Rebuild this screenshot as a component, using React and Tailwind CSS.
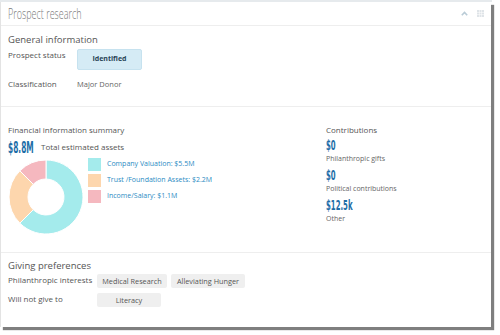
const BODY = { fontFamily: "'Open Sans', 'Noto Sans', sans-serif" };
const COND = { fontFamily: "'DejaVu Sans Condensed', 'DejaVu Sans', sans-serif" };

function arcPath(cx, cy, r, R, a0, a1) {
  const rad = (a) => ((a - 90) * Math.PI) / 180;
  const p = (rr, a) => [cx + rr * Math.cos(rad(a)), cy + rr * Math.sin(rad(a))];
  const large = a1 - a0 > 180 ? 1 : 0;
  const [x0, y0] = p(R, a0);
  const [x1, y1] = p(R, a1);
  const [x2, y2] = p(r, a1);
  const [x3, y3] = p(r, a0);
  return `M${x0} ${y0} A${R} ${R} 0 ${large} 1 ${x1} ${y1} L${x2} ${y2} A${r} ${r} 0 ${large} 0 ${x3} ${y3} Z`;
}

function Donut() {
  const slices = [
    { from: 0, to: 225, color: "#a4ebec" },
    { from: 225, to: 315, color: "#fdd6ad" },
    { from: 315, to: 360, color: "#f5b8bf" },
  ];
  return (
    <svg width="76" height="76" viewBox="0 0 76 76">
      {slices.map((s) => (
        <path
          key={s.from}
          d={arcPath(38, 38, 18, 37, s.from, s.to)}
          fill={s.color}
          stroke="#fff"
          strokeWidth="1"
        />
      ))}
    </svg>
  );
}

function Legend({ color, label }) {
  return (
    <div className="flex items-center gap-[6px] h-[16px]">
      <span className="w-[13px] h-[13px]" style={{ background: color }} />
      <span className="text-[7px] text-[#2b8bc3]">{label}</span>
    </div>
  );
}

function Amount({ children, className = "" }) {
  return (
    <div className={"h-[12px] flex items-center " + className}>
      <span
        className="inline-block origin-left scale-x-[0.55] text-[14px] font-bold text-[#1d6ea7] leading-none"
        style={COND}
      >
        {children}
      </span>
    </div>
  );
}

function Tag({ children, w }) {
  return (
    <span
      className={"h-[14px] flex items-center justify-center bg-[#efefef] rounded-[2px] text-[7.3px] text-[#555] " + w}
    >
      {children}
    </span>
  );
}

export default function App() {
  return (
    <div className="w-[500px] h-[335px] bg-white overflow-hidden" style={BODY}>
      <div className="w-[492px] h-[2px] bg-[#e6eaed]" />
      <div className="w-[491px] h-[325px] bg-white border-l border-[#e3e3e3] shadow-[3px_3px_1px_rgba(0,0,0,0.5)] flex flex-col">
        {/* header */}
        <div className="h-[24px] flex items-center justify-between pl-[7px] pr-[7px] border-b border-[#eeeeee]">
          <span
            className="inline-block origin-left scale-x-[0.6] text-[15px] font-light text-[#7a7a7a] leading-none whitespace-nowrap"
            style={{ fontFamily: "'Open Sans', sans-serif" }}
          >
            Prospect research
          </span>
          <div className="flex items-center gap-[9px]">
            <svg width="7" height="5" viewBox="0 0 7 5">
              <path d="M0.8 4.2 L3.5 1.5 L6.2 4.2" fill="none" stroke="#b9cbd6" strokeWidth="1.6" />
            </svg>
            <svg width="7" height="7" viewBox="0 0 7 7" fill="#dfe4e8">
              <rect x="0" y="0" width="2" height="2" />
              <rect x="2.5" y="0" width="2" height="2" />
              <rect x="5" y="0" width="2" height="2" />
              <rect x="0" y="2.5" width="2" height="2" />
              <rect x="2.5" y="2.5" width="2" height="2" />
              <rect x="5" y="2.5" width="2" height="2" />
              <rect x="0" y="5" width="2" height="2" />
              <rect x="2.5" y="5" width="2" height="2" />
              <rect x="5" y="5" width="2" height="2" />
            </svg>
          </div>
        </div>

        {/* general information */}
        <div className="h-[81px] border-b border-[#eeeeee] pl-[7px] pt-[8px]">
          <div className="text-[9.5px] text-[#555] leading-[12px]">General information</div>
          <div className="flex mt-[3px]">
            <div className="w-[69px] text-[8px] text-[#555] leading-[12px] whitespace-nowrap">Prospect status</div>
            <div className="w-[65px] h-[21px] flex items-center justify-center bg-[#d5ebf5] border border-[#c6e2ef] rounded-[2px] text-[7px] font-bold text-[#2a4557]">
              Identified
            </div>
          </div>
          <div className="flex mt-[8px] text-[8px] text-[#555] leading-[12px]">
            <div className="w-[69px]">Classification</div>
            <div className="text-[#666] text-[7.5px]">Major Donor</div>
          </div>
        </div>

        {/* financial */}
        <div className="h-[146px] border-b border-[#eeeeee] flex pt-[17px]">
          <div className="w-[325px] pl-[7px]">
            <div className="text-[8px] font-medium text-[#555] leading-[12px] whitespace-nowrap">
              Financial information summary
            </div>
            <div className="flex items-center mt-[3px] h-[15px]">
              <div className="w-[33px]">
                <span
                  className="inline-block origin-left scale-x-[0.55] text-[15px] font-bold text-[#1d6ea7] leading-none"
                  style={COND}
                >
                  $8.8M
                </span>
              </div>
              <span className="text-[8px] text-[#555]">Total estimated assets</span>
            </div>
            <div className="flex mt-[2px]">
              <div className="mt-[3px]">
                <Donut />
              </div>
              <div className="ml-[4px] flex flex-col">
                <Legend color="#a4ebec" label="Company Valuation: $5.5M" />
                <Legend color="#fdd6ad" label="Trust /Foundation Assets: $2.2M" />
                <Legend color="#f5b8bf" label="Income/Salary: $1.1M" />
              </div>
            </div>
          </div>
          <div className="flex-1">
            <div className="text-[8px] font-medium text-[#555] leading-[12px]">Contributions</div>
            <Amount className="mt-[3px]">$0</Amount>
            <div className="text-[7px] text-[#666] leading-[11px] mt-[2px]">Philanthropic gifts</div>
            <Amount className="mt-[5px]">$0</Amount>
            <div className="text-[7px] text-[#666] leading-[11px] mt-[2px]">Political contributions</div>
            <Amount className="mt-[5px]">$12.5k</Amount>
            <div className="text-[7px] text-[#666] leading-[11px] mt-[2px]">Other</div>
          </div>
        </div>

        {/* giving preferences */}
        <div className="flex-1 pl-[7px] pt-[7px]">
          <div className="text-[9.5px] text-[#555] leading-[12px]">Giving preferences</div>
          <div className="flex items-start mt-[2px]">
            <div className="w-[89px] text-[8px] text-[#555] leading-[12px] whitespace-nowrap">Philanthropic interests</div>
            <div className="flex gap-[4px]">
              <Tag w="w-[70px]">Medical Research</Tag>
              <Tag w="w-[74px]">Alleviating Hunger</Tag>
            </div>
          </div>
          <div className="flex items-start mt-[5px]">
            <div className="w-[89px] text-[8px] text-[#555] leading-[12px] whitespace-nowrap">Will not give to</div>
            <Tag w="w-[64px]">Literacy</Tag>
          </div>
        </div>
      </div>
    </div>
  );
}
